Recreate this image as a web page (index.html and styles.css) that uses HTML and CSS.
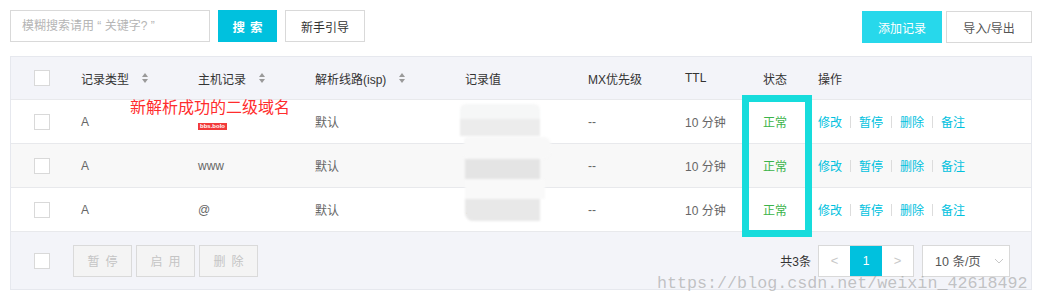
FILE: index.html
```html
<!DOCTYPE html>
<html lang="zh-CN">
<head>
<meta charset="utf-8">
<title>DNS 解析记录</title>
<link rel="stylesheet" href="styles.css">
</head>
<body>
<div class="page">
  <div class="toolbar">
    <div class="tool-left">
      <input class="search" type="text" placeholder="模糊搜索请用 “ 关键字? ”">
      <button class="btn btn-primary btn-search">搜索</button>
      <button class="btn btn-default">新手引导</button>
    </div>
    <div class="tool-right">
      <button class="btn btn-add">添加记录</button>
      <button class="btn btn-default btn-io">导入/导出</button>
    </div>
  </div>

  <div class="table">
    <div class="row head">
      <div class="cell c-check"><span class="checkbox"></span></div>
      <div class="cell">记录类型<span class="sort"><i class="up"></i><i class="down"></i></span></div>
      <div class="cell">主机记录<span class="sort"><i class="up"></i><i class="down"></i></span></div>
      <div class="cell">解析线路(isp)<span class="sort"><i class="up"></i><i class="down"></i></span></div>
      <div class="cell">记录值</div>
      <div class="cell">MX优先级</div>
      <div class="cell">TTL</div>
      <div class="cell">状态</div>
      <div class="cell">操作</div>
    </div>

    <div class="row body">
      <div class="cell c-check"><span class="checkbox"></span></div>
      <div class="cell">A</div>
      <div class="cell"><span class="masked">bbs.bolo</span></div>
      <div class="cell">默认</div>
      <div class="cell"></div>
      <div class="cell">--</div>
      <div class="cell">10 分钟</div>
      <div class="cell status">正常</div>
      <div class="cell ops"><a>修改</a><span class="sep"></span><a>暂停</a><span class="sep"></span><a>删除</a><span class="sep"></span><a>备注</a></div>
    </div>

    <div class="row body alt">
      <div class="cell c-check"><span class="checkbox"></span></div>
      <div class="cell">A</div>
      <div class="cell">www</div>
      <div class="cell">默认</div>
      <div class="cell"></div>
      <div class="cell">--</div>
      <div class="cell">10 分钟</div>
      <div class="cell status">正常</div>
      <div class="cell ops"><a>修改</a><span class="sep"></span><a>暂停</a><span class="sep"></span><a>删除</a><span class="sep"></span><a>备注</a></div>
    </div>

    <div class="row body">
      <div class="cell c-check"><span class="checkbox"></span></div>
      <div class="cell">A</div>
      <div class="cell">@</div>
      <div class="cell">默认</div>
      <div class="cell value-peek">2</div>
      <div class="cell">--</div>
      <div class="cell">10 分钟</div>
      <div class="cell status">正常</div>
      <div class="cell ops"><a>修改</a><span class="sep"></span><a>暂停</a><span class="sep"></span><a>删除</a><span class="sep"></span><a>备注</a></div>
    </div>

    <div class="footer">
      <div class="foot-left">
        <span class="checkbox"></span>
        <button class="btn btn-disabled">暂停</button>
        <button class="btn btn-disabled">启用</button>
        <button class="btn btn-disabled">删除</button>
      </div>
      <div class="foot-right">
        <span class="total">共3条</span>
        <div class="pager">
          <span class="pg pg-arrow">&lt;</span>
          <span class="pg pg-active">1</span>
          <span class="pg pg-arrow">&gt;</span>
        </div>
        <div class="size-select">10 条/页<svg class="chev" width="10" height="6" viewBox="0 0 10 6"><path d="M1 1 L5 5 L9 1" fill="none" stroke="#c8c8c8" stroke-width="1"/></svg></div>
      </div>
    </div>
  </div>

  <div class="blur">
    <div class="b b1"></div>
    <div class="b b2"></div>
    <div class="b b3"></div>
    <div class="b b4"></div>
    <div class="b b5"></div>
    <div class="b b6"></div>
  </div>
  <div class="highlight"></div>
  <div class="annot">新解析成功的二级域名</div>
  <div class="watermark">https://blog.csdn.net/weixin_42618492</div>
</div>
</body>
</html>
```

FILE: styles.css
```css
* { box-sizing: border-box; }
html, body { margin: 0; padding: 0; background: #fff; }
body {
  font-family: "Liberation Sans", "Noto Sans CJK SC", sans-serif;
  font-size: 12px;
  color: #666;
}
.page {
  position: relative;
  width: 1039px;
  height: 303px;
  padding: 10px 7px 0 10px;
}
.toolbar {
  display: flex;
  justify-content: space-between;
  height: 33px;
}
.tool-left { display: flex; gap: 8px; }
.tool-right { display: flex; gap: 4px; padding-top: 1px; }
.search {
  width: 200px;
  height: 32px;
  border: 1px solid #d9d9d9;
  padding: 0 11px;
  font-family: "Liberation Sans", "Noto Sans CJK SC", sans-serif;
  font-size: 12px;
  outline: none;
}
.search::placeholder { color: #b5b5b5; }
.btn {
  height: 32px;
  border: 1px solid #d9d9d9;
  background: #fff;
  font-family: "Liberation Sans", "Noto Sans CJK SC", sans-serif;
  font-size: 12px;
  color: #333;
  padding: 0;
  cursor: pointer;
}
.btn-primary {
  background: #00c1de;
  border-color: #00c1de;
  color: #fff;
}
.btn-search { width: 59px; letter-spacing: 5px; text-indent: 5px; font-weight: bold; font-size: 12.5px; }
.btn-default { width: 80px; }
.btn-add {
  width: 80px;
  background: #27d8eb;
  border-color: #27d8eb;
  color: #fff;
}
.btn-io { width: 86px; color: #555; }

.table {
  margin-top: 13px;
  border: 1px solid #e6e8ee;
  border-bottom: 0;
}
.row {
  display: grid;
  grid-template-columns: 70px 117px 117px 150px 123px 97px 78px 55px 1fr;
  height: 44px;
  align-items: center;
  border-bottom: 1px solid #e8e9ec;
}
.row.head {
  background: #f3f4f9;
  color: #333;
  height: 43px;
}
.row.body { background: #fff; }
.row.alt { background: #f8f8f8; }
.cell { display: flex; align-items: center; white-space: nowrap; }
.c-check { padding-left: 23px; }
.checkbox {
  display: inline-block;
  width: 16px;
  height: 16px;
  background: #fff;
  border: 1px solid #d9d9d9;
}
.sort {
  display: inline-flex;
  flex-direction: column;
  gap: 2px;
  margin-left: 13px;
}
.sort i {
  width: 0; height: 0;
  border-left: 3.5px solid transparent;
  border-right: 3.5px solid transparent;
}
.sort .up { border-bottom: 4px solid #9a9a9a; }
.sort .down { border-top: 4px solid #9a9a9a; }
.status { color: #3bb44a; }
.ops { color: #00c1de; }
.ops a { color: #00c1de; }
.sep {
  display: inline-block;
  width: 1px;
  height: 12px;
  background: #dcdcdc;
  margin: 0 8px;
}
.masked {
  display: inline-block;
  background: #f23a3a;
  color: #fff;
  font-size: 6px;
  line-height: 7px;
  height: 7px;
  padding: 0 2px;
  margin-top: 10px;
  font-weight: bold;
  letter-spacing: 0;
  overflow: hidden;
}
.value-peek { color: #999; padding-left: 1px; }

.footer {
  display: flex;
  justify-content: space-between;
  align-items: center;
  height: 58px;
  background: #f3f4f9;
  border-bottom: 1px solid #e6e8ee;
  padding: 0 21px 0 23px;
}
.foot-left { display: flex; align-items: center; gap: 4px; }
.foot-left .checkbox { margin-right: 19px; }
.btn-disabled {
  width: 59px;
  background: #f4f4f4;
  border-color: #dadada;
  color: #c4c4c4;
  letter-spacing: 6px;
  text-indent: 6px;
}
.foot-right { display: flex; align-items: center; }
.total { color: #333; margin-right: 7px; }
.pager {
  display: flex;
  height: 32px;
  border: 1px solid #d9d9d9;
  background: #fff;
}
.pg {
  width: 31px;
  display: flex;
  align-items: center;
  justify-content: center;
}
.pg-arrow { color: #c8c8c8; font-size: 13px; }
.pg-active { background: #00c1de; color: #fff; width: 32px; }
.size-select {
  margin-left: 8px;
  width: 88px;
  height: 32px;
  border: 1px solid #d9d9d9;
  background: #fff;
  display: flex;
  align-items: center;
  padding-left: 12px;
  color: #555;
  font-size: 12.5px;
}
.chev { margin-left: 13px; }

.blur {
  position: absolute;
  left: 460px;
  top: 104px;
  width: 95px;
  height: 118px;
  filter: blur(1.2px);
}
.b { position: absolute; }
.b1 { left: 0; top: 0; width: 80px; height: 15px; background: #f6f7f7; border-radius: 6px 6px 0 0; }
.b2 { left: 0; top: 15px; width: 80px; height: 17px; background: #ececec; }
.b3 { left: 4px; top: 33px; width: 87px; height: 22px; background: #f8f8f8; border-radius: 4px 8px 8px 4px; }
.b4 { left: 5px; top: 55px; width: 75px; height: 20px; background: #e4e4e4; }
.b5 { left: 5px; top: 75px; width: 80px; height: 20px; background: #f9f9f9; }
.b6 { left: 5px; top: 95px; width: 75px; height: 22px; background: #e8e8e8; border-radius: 0 0 0 8px; }

.highlight {
  position: absolute;
  left: 742px;
  top: 95px;
  width: 70px;
  height: 142px;
  border: 7px solid #17dcdc;
}
.annot {
  position: absolute;
  left: 130px;
  top: 95px;
  font-family: "Noto Sans CJK SC", sans-serif;
  font-size: 16px;
  line-height: 22px;
  color: #ff2d2d;
  letter-spacing: 0;
}
.watermark {
  position: absolute;
  left: 657px;
  top: 274px;
  font-family: "Liberation Mono", monospace;
  font-size: 16.7px;
  line-height: 20px;
  color: rgba(150, 150, 150, 0.55);
  white-space: nowrap;
}
```
